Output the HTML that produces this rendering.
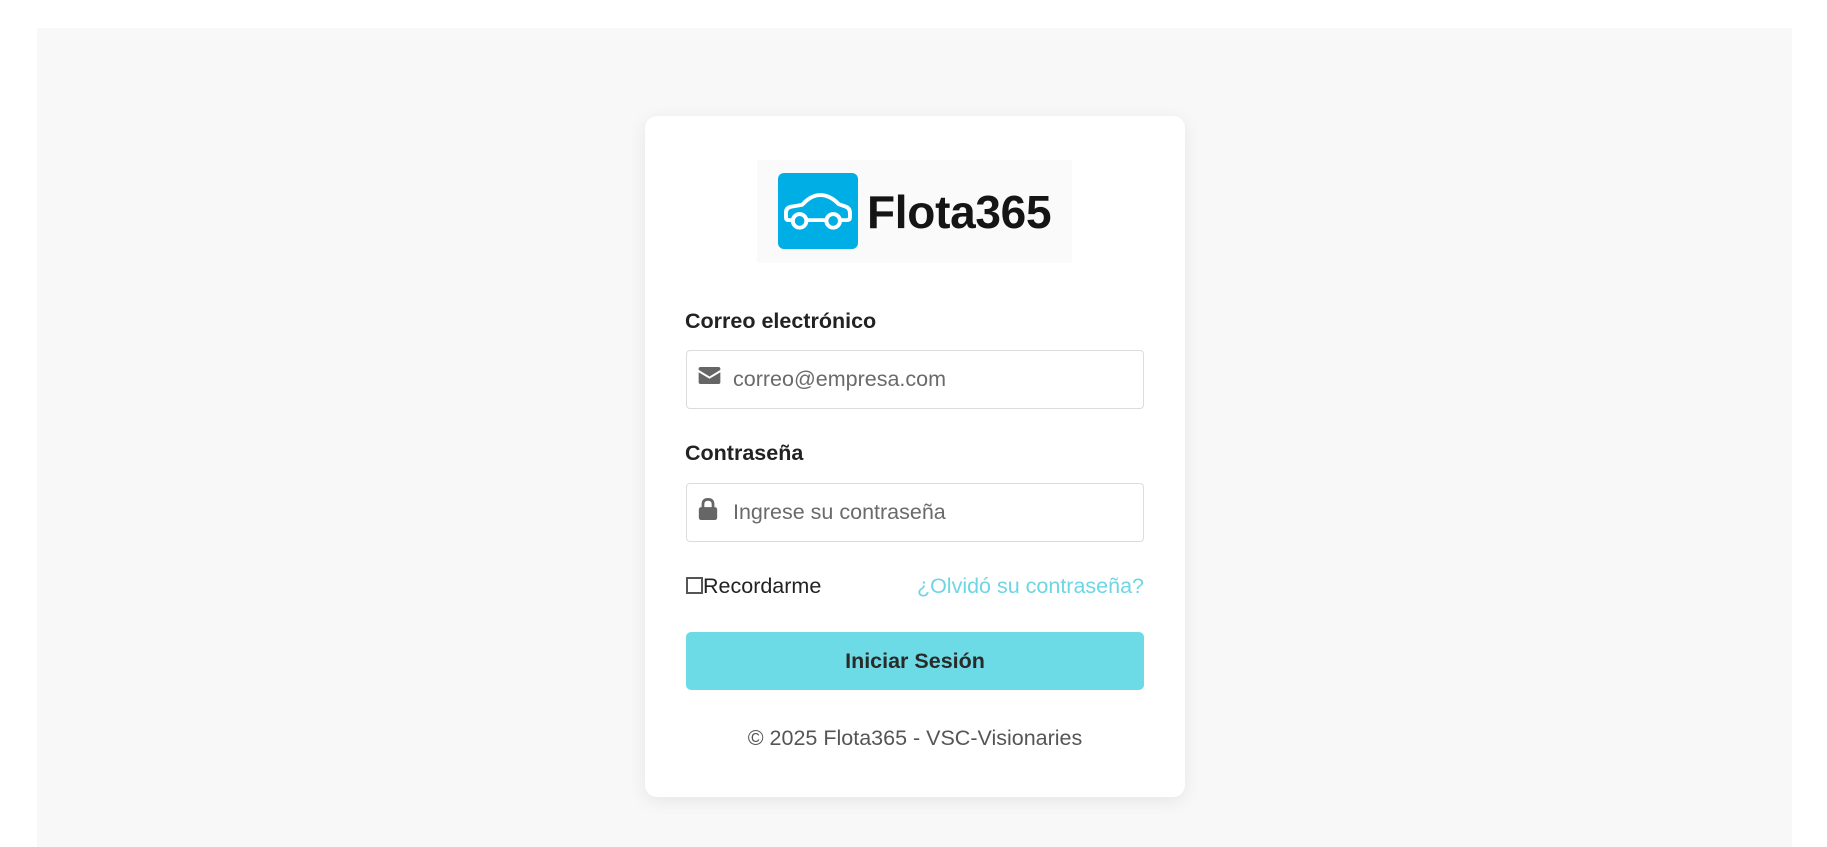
<!DOCTYPE html>
<html><head><meta charset="utf-8">
<style>
*{margin:0;padding:0;box-sizing:border-box}
html,body{width:1827px;height:847px;background:#fff;overflow:hidden;font-family:"Liberation Sans",Arial,sans-serif}
.bg{position:absolute;left:37px;top:28px;width:1755px;height:819px;background:#f8f8f8}
.card{position:absolute;left:645px;top:116px;width:540px;height:681px;background:#fff;border-radius:12px;box-shadow:0 4px 18px rgba(0,0,0,0.08)}
.logo{position:absolute;left:757px;top:160px;width:315px;height:103px;background:#fafafa}
.sq{position:absolute;left:778px;top:173px;width:80px;height:76px;background:#00aee6;border-radius:6px}
.brand{position:absolute;left:867px;top:184px;font-size:46px;font-weight:bold;color:#151515;letter-spacing:-0.3px;line-height:56px}
.lbl{position:absolute;left:685px;font-size:21.5px;font-weight:bold;color:#222;line-height:24px}
.inp{position:absolute;left:686px;width:458px;height:59px;border:1.5px solid #dcdcdc;border-radius:4px;background:#fff}
.ph{position:absolute;left:733px;font-size:21.5px;color:#6a6a6a;line-height:59px}
.t{position:absolute;font-size:21.5px;line-height:24px}
.btn{position:absolute;left:686px;top:632px;width:458px;height:58px;background:#6cdbe6;border-radius:5px;text-align:center;line-height:58px;font-size:21.5px;font-weight:bold;color:#2a2a2a}
</style></head><body>
<div class="bg"></div>
<div class="card"></div>
<div class="logo"></div>
<div class="sq"><svg width="80" height="76" viewBox="0 0 100 100" preserveAspectRatio="none">
<path d="M18 62 L13 62 Q10 62 10 58 L10 52 Q10 45 18 44 L30 42 Q41 29 53 29 Q65 29 76 41 L84 44 Q90 46 90 53 L90 58 Q90 62 86 62 L79 62 M59 62 L37 62" fill="none" stroke="#fff" stroke-width="5" stroke-linecap="round" stroke-linejoin="round"/>
<ellipse cx="27" cy="63" rx="8.5" ry="9" fill="#00aee6" stroke="#fff" stroke-width="5"/>
<ellipse cx="69" cy="63" rx="8.5" ry="9" fill="#00aee6" stroke="#fff" stroke-width="5"/>
</svg></div>
<div class="brand">Flota365</div>

<div class="lbl" style="top:309px">Correo electrónico</div>
<div class="inp" style="top:350px"></div>
<svg style="position:absolute;left:698px;top:367px" width="23" height="17" viewBox="0 0 23 18"><path d="M0 2 Q0 0 2 0 L21 0 Q23 0 23 2 L23 3 L11.5 10 L0 3Z" fill="#666"/><path d="M0 5.5 L11.5 12.5 L23 5.5 L23 16 Q23 18 21 18 L2 18 Q0 18 0 16Z" fill="#666"/></svg>
<div class="ph" style="top:350px">correo@empresa.com</div>

<div class="lbl" style="top:441px">Contraseña</div>
<div class="inp" style="top:483px"></div>
<svg style="position:absolute;left:698px;top:498px" width="20" height="22" viewBox="0 0 20 24"><path d="M4.5 11 L4.5 7 Q4.5 1.5 10 1.5 Q15.5 1.5 15.5 7 L15.5 11" fill="none" stroke="#666" stroke-width="3"/><rect x="0" y="10" width="20" height="14" rx="2.5" fill="#666"/></svg>
<div class="ph" style="top:483px">Ingrese su contraseña</div>

<div style="position:absolute;left:686px;top:577px;width:17px;height:17px;border:2px solid #555;background:#fff"></div>
<div class="t" style="left:703px;top:574px;color:#222">Recordarme</div>
<div class="t" style="right:683px;top:574px;color:#6dd6e4">¿Olvidó su contraseña?</div>

<div class="btn">Iniciar Sesión</div>
<div class="t" style="left:645px;width:540px;text-align:center;top:726px;color:#555">© 2025 Flota365 - VSC-Visionaries</div>
</body></html>
